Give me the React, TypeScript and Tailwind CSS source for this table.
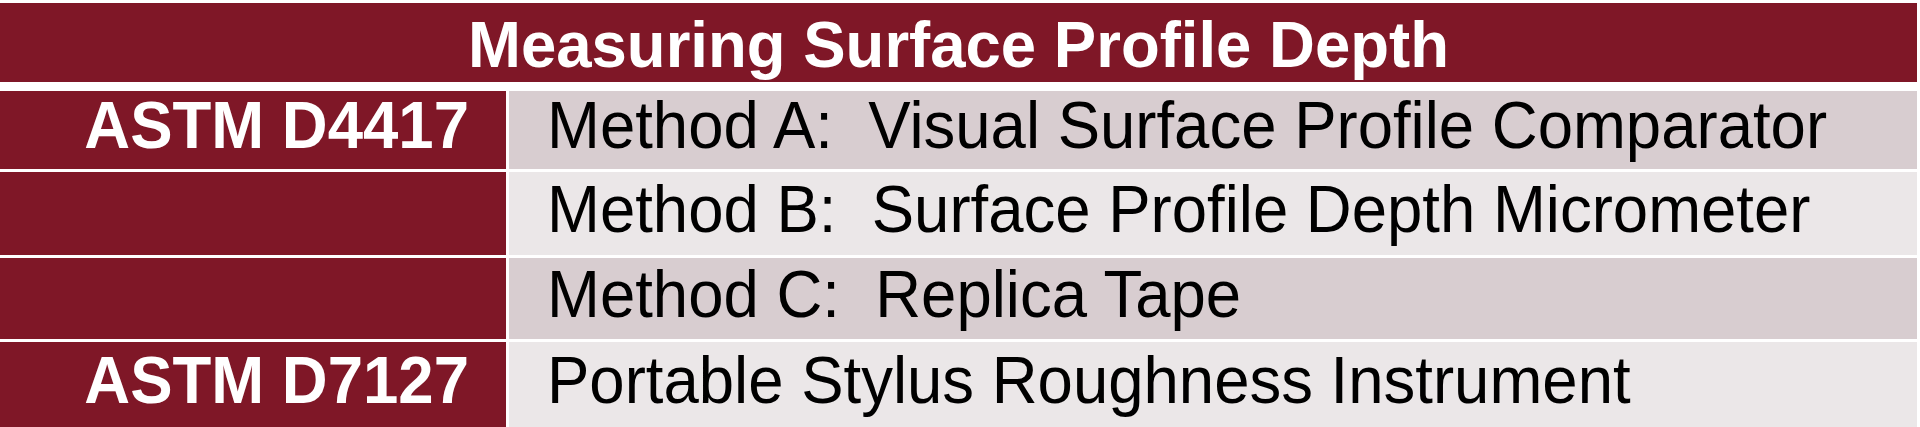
import React from "react";

// Rows of the surface profile table
const rows = [
  { standard: "ASTM D4417", method: "Method A:\u00a0 Visual Surface Profile Comparator", height: "h-[78px]", bg: "bg-[#d8cdd0]" },
  { standard: "", method: "Method B:\u00a0 Surface Profile Depth Micrometer", height: "h-[83px]", bg: "bg-[#ebe7e8]" },
  { standard: "", method: "Method C:\u00a0 Replica Tape", height: "h-[81px]", bg: "bg-[#d8cdd0]" },
  { standard: "ASTM D7127", method: "Portable Stylus Roughness Instrument", height: "h-[85px]", bg: "bg-[#ebe7e8]" },
];

function App() {
  return (
    <div className="h-[427px] w-[1920px] overflow-hidden bg-white pt-[3px] pr-[3px] font-['Liberation_Sans',Arial,sans-serif]">
      {/* Title bar */}
      <div className="flex h-[79px] items-center justify-center bg-[#7f1727] pt-[4px]">
        <h1 className="inline-block scale-y-[1.03] text-[63.5px] leading-none font-bold text-white">
          Measuring Surface Profile Depth
        </h1>
      </div>

      <div className="mt-[9px] grid grid-cols-[506px_1fr] gap-x-[3px] gap-y-[3px]">
        {rows.map((row, i) => (
          <React.Fragment key={i}>
            <div className={`flex items-center justify-end bg-[#7f1727] pr-[37px] pb-[8px] ${row.height}`}>
              <span className="inline-block scale-y-[1.04] text-[63.5px] leading-none font-bold text-white">{row.standard}</span>
            </div>
            <div className={`flex items-center pl-[38px] pb-[8px] ${row.bg} ${row.height}`}>
              <span className="inline-block scale-y-[1.04] text-[63.5px] leading-none text-black">{row.method}</span>
            </div>
          </React.Fragment>
        ))}
      </div>
    </div>
  );
}

export default App;
